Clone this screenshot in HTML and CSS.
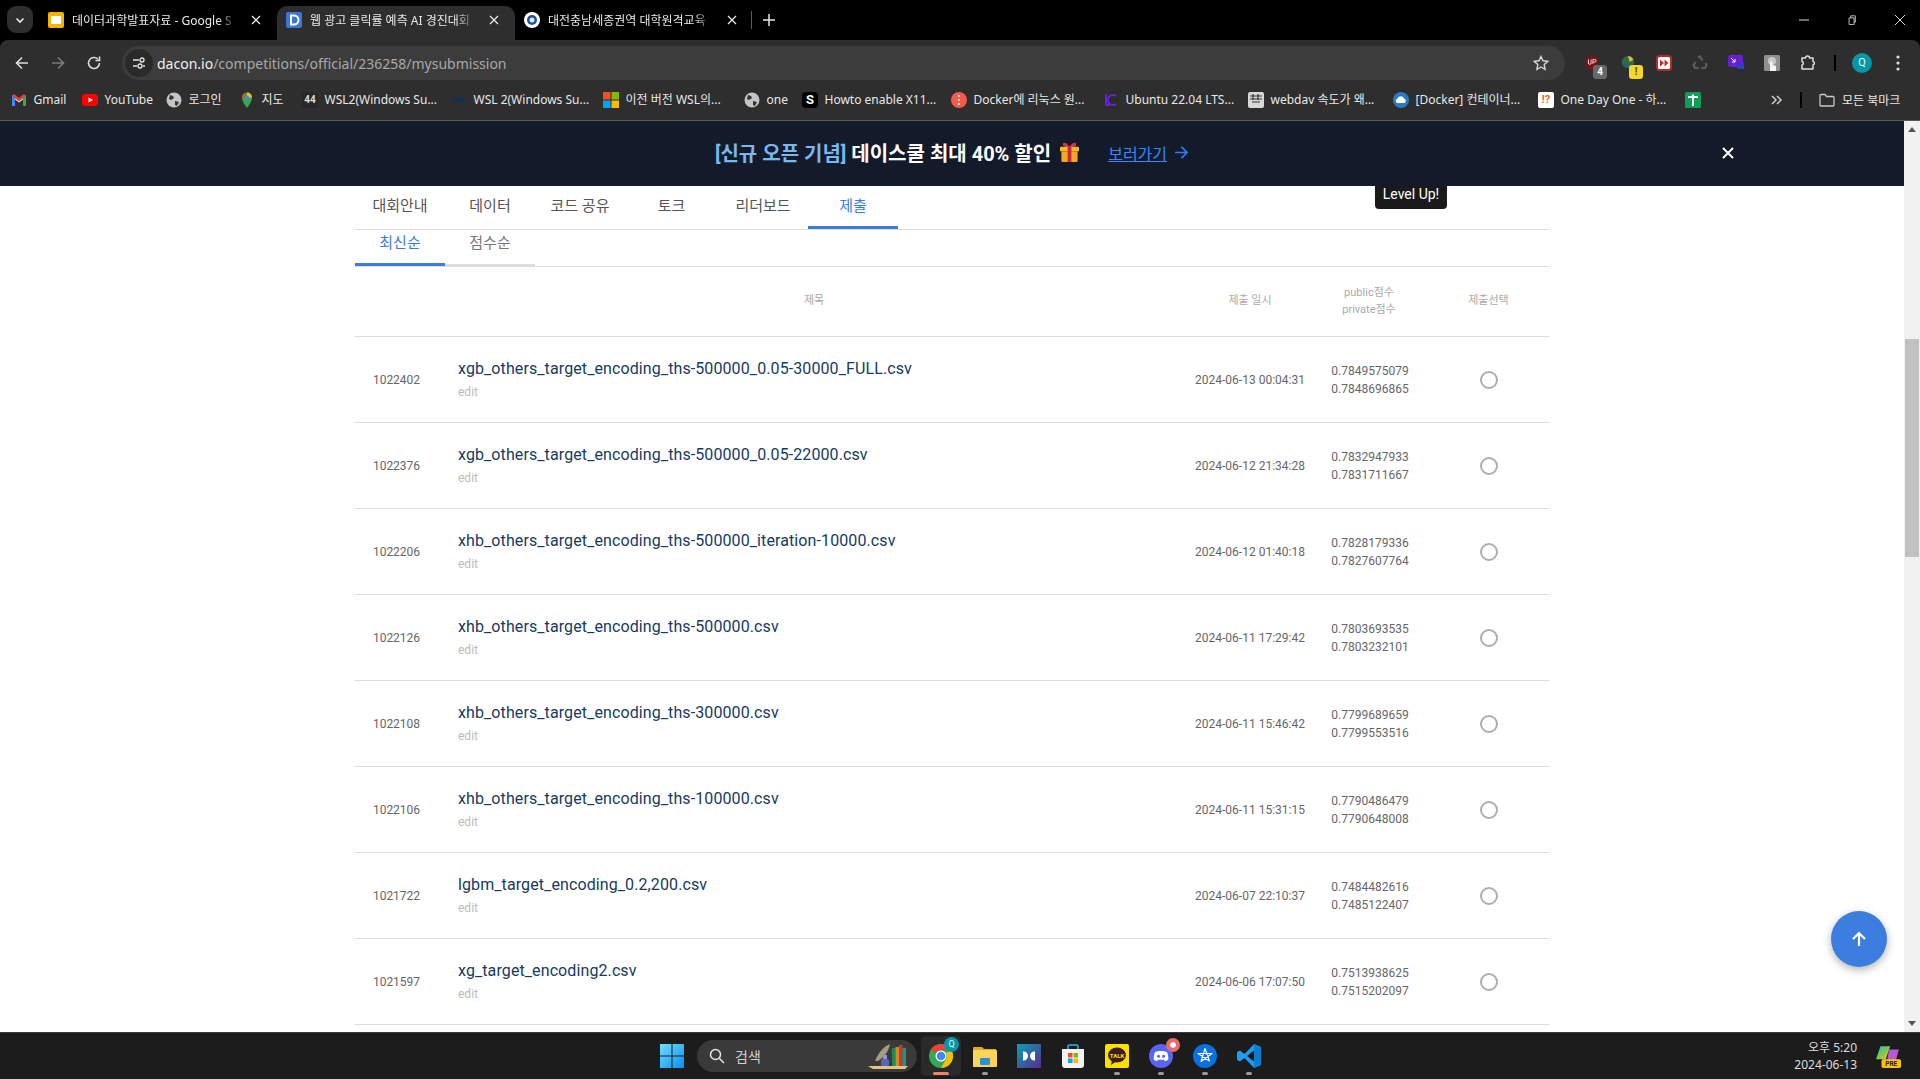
FILE: index.html
```html
<!DOCTYPE html>
<html lang="ko">
<head>
<meta charset="utf-8">
<title>dacon mysubmission</title>
<link rel="stylesheet" href="styles.css">
</head>
<body>
<header class="browser">
  <div class="tabstrip">
    <div class="tabswitch"><svg width="12" height="12" viewBox="0 0 12 12"><path d="M2.5 4.5 6 8l3.5-3.5" fill="none" stroke="#e8e8e8" stroke-width="1.6"/></svg></div>
    <div class="tab">
      <svg class="fav" viewBox="0 0 16 16"><rect x="0" width="16" height="16" rx="2" fill="#f4b400"/><rect x="3" y="4" width="10" height="8" fill="#fff"/></svg>
      <span class="tabtitle">데이터과학발표자료 - Google S</span>
      <svg class="tabclose" viewBox="0 0 10 10"><path d="M1 1l8 8M9 1 1 9" stroke="#e8e8e8" stroke-width="1.3"/></svg>
    </div>
    <div class="tab tab-active">
      <svg class="fav" viewBox="0 0 16 16"><rect width="16" height="16" rx="2" fill="#3a77d8"/><path d="M5 3.5h3a4.500 4.500 0 0 1 0 9H5z" fill="none" stroke="#fff" stroke-width="2"/></svg>
      <span class="tabtitle">웹 광고 클릭률 예측 AI 경진대회</span>
      <svg class="tabclose" viewBox="0 0 10 10"><path d="M1 1l8 8M9 1 1 9" stroke="#e8e8e8" stroke-width="1.3"/></svg>
    </div>
    <div class="tab">
      <svg class="fav" viewBox="0 0 16 16"><circle cx="8" cy="8" r="8" fill="#fff"/><circle cx="8" cy="8" r="5" fill="#1f4f96"/><circle cx="8" cy="8" r="2.500" fill="#dbe6f5"/></svg>
      <span class="tabtitle">대전충남세종권역 대학원격교육</span>
      <svg class="tabclose" viewBox="0 0 10 10"><path d="M1 1l8 8M9 1 1 9" stroke="#e8e8e8" stroke-width="1.3"/></svg>
    </div>
    <span class="tabsep"></span>
    <svg class="tabplus" viewBox="0 0 12 12"><path d="M6 0v12M0 6h12" stroke="#e8e8e8" stroke-width="1.5"/></svg>
    <div class="winctl">
      <svg viewBox="0 0 10 10"><path d="M0 5h10" stroke="#ddd"/></svg>
      <svg viewBox="0 0 10 12"><path d="M1.500 3.500h6v8h-6zM3.500 3.500v-2.500h5.500v7.500H7.500" fill="none" stroke="#ddd"/></svg>
      <svg viewBox="0 0 10 10"><path d="M0 0l10 10M10 0 0 10" stroke="#ddd"/></svg>
    </div>
  </div>
  <div class="chrome">
    <div class="toolbar">
      <div class="navbtns">
        <svg viewBox="0 0 16 16"><path d="M14 8H2.500M8 2.500 2.500 8 8 13.500" fill="none" stroke="#dedede" stroke-width="1.600"/></svg>
        <svg viewBox="0 0 16 16"><path d="M2 8h11.500M8 2.500 13.500 8 8 13.500" fill="none" stroke="#7b7b7b" stroke-width="1.600"/></svg>
        <svg viewBox="0 0 16 16"><path d="M13.500 8A5.500 5.500 0 1 1 11.800 4M13.500 1.500v4h-4" fill="none" stroke="#dedede" stroke-width="1.600"/></svg>
      </div>
      <div class="omnibox">
        <span class="siteinfo"><svg width="14" height="14" viewBox="0 0 14 14"><path d="M1 4h6M1 10h4M11 10h2" stroke="#e4e4e4" stroke-width="1.300"/><circle cx="10" cy="4" r="2" fill="none" stroke="#e4e4e4" stroke-width="1.300"/><circle cx="8" cy="10" r="2" fill="none" stroke="#e4e4e4" stroke-width="1.300"/></svg></span>
        <span class="url"><b class="host">dacon.io</b>/competitions/official/236258/mysubmission</span>
        <svg class="star" viewBox="0 0 16 16"><path d="m8 1.500 2 4.300 4.700.6-3.500 3.200.9 4.700L8 12l-4.100 2.300.9-4.700L1.300 6.400 6 5.800z" fill="none" stroke="#d8d8d8" stroke-width="1.400"/></svg>
      </div>
      <div class="exts">
        <span class="ext"><svg viewBox="0 0 16 18"><path d="M8 1 15 3.500V9c0 4-3 6.500-7 8-4-1.500-7-4-7-8V3.500z" fill="#7d1414"/><path d="M4 5v4a1.500 1.500 0 0 0 3 0V5M9 10V5h2a1.500 1.500 0 0 1 0 3H9" fill="none" stroke="#eee" stroke-width="1"/></svg><i class="badge badge-gray">4</i></span>
        <span class="ext"><svg viewBox="0 0 16 18"><circle cx="8" cy="8" r="7" fill="#2f6b4a"/><path d="M8 1a7 7 0 0 1 6 4l-4 3z" fill="#e3b92c"/><path d="M2 11l4-2 1 5z" fill="#2a4fa8"/></svg><i class="badge badge-yellow">!</i></span>
        <span class="ext"><svg viewBox="0 0 16 16"><rect x="1" y="1" width="14" height="14" rx="2.500" fill="#fff" stroke="#b52a2a" stroke-width="2"/><path d="M4 4.500 8 8l-4 3.500zM8.500 4.500 12.500 8l-4 3.500z" fill="#c62b2b"/></svg></span>
        <span class="ext"><svg viewBox="0 0 16 16"><path d="m6 2.500 2-1 2.500 4M13.500 8l1 2-1.500 3H9.500M6.500 13H3l-1.500-2.500L3.500 7" fill="none" stroke="#5c5c5c" stroke-width="2.200"/></svg></span>
        <span class="ext"><svg viewBox="0 0 16 16"><rect width="15" height="12" y="0" rx="2.500" fill="#6a1fd6"/><rect x="9" y="8" width="8" height="6" rx="1.500" fill="#2e3fd0"/><path d="M3 3l4 4M7 4v3H4" stroke="#fff" fill="none"/></svg></span>
        <span class="ext"><svg viewBox="0 0 16 16"><rect width="16" height="16" rx="1.500" fill="#8f8f8f"/><circle cx="8" cy="6" r="4" fill="#c9c9c9"/><path d="M6 16V7.500a1.200 1.200 0 0 1 2.400 0V10l3.600.8V16z" fill="#f4f4f4"/></svg></span>
        <span class="ext"><svg viewBox="0 0 16 16"><path d="M2 3h3.500a2 2 0 0 1 4 0H13v3.500a1.800 1.800 0 0 1 0 3.500v4H2v-4a1.800 1.800 0 0 0 0-3.500z" fill="none" stroke="#dedede" stroke-width="1.500" stroke-linejoin="round"/></svg></span>
        <span class="toolsep"></span>
        <span class="avatar">Q</span>
        <svg class="menu" viewBox="0 0 4 16"><circle cx="2" cy="2" r="1.600" fill="#dedede"/><circle cx="2" cy="8" r="1.600" fill="#dedede"/><circle cx="2" cy="14" r="1.600" fill="#dedede"/></svg>
      </div>
    </div>
    <div class="bookmarks">
      <div class="bmgrid">
        <span class="bm"><svg viewBox="0 0 16 16"><path d="M1 14V4l7 5 7-5v10h-3V7.500L8 10.500 4 7.500V14z" fill="#e8e8e8"/><path d="M1 14V3.500l3 2.200V14z" fill="#4285f4"/><path d="M15 14V3.500l-3 2.200V14z" fill="#34a853"/><path d="M1 3.500 3 2l5 4 5-4 2 1.500L8 9z" fill="#ea4335"/></svg>Gmail</span>
        <span class="bm"><svg viewBox="0 0 16 16"><rect y="2" width="16" height="12" rx="3" fill="#f00"/><path d="M6.500 5.500v5L11 8z" fill="#fff"/></svg>YouTube</span>
        <span class="bm"><svg viewBox="0 0 16 16"><circle cx="8" cy="8" r="7.500" fill="#c4c4c4"/><path d="M4 3l3 1 1 2-3 2-2-1zM9 9l4 1-2 4-2-1z" fill="#333"/></svg>로그인</span>
        <span class="bm"><svg viewBox="0 0 16 16"><path d="M8 16C5 11.500 3 9 3 5.500a5 5 0 0 1 10 0C13 9 11 11.500 8 16z" fill="#34a853"/><path d="M3 5.500a5 5 0 0 1 2-4l3 4H3z" fill="#ea4335"/><path d="M8 .5a5 5 0 0 1 5 5H8z" fill="#fbbc04"/><circle cx="8" cy="5.500" r="2" fill="#4285f4"/></svg>지도</span>
        <span class="bm"><span class="txticon txticon-dark">44</span>WSL2(Windows Su...</span>
        <span class="bm"><svg viewBox="0 0 16 16"><circle cx="5" cy="8" r="3" fill="#15304f"/><circle cx="11" cy="8" r="3" fill="#15304f"/></svg>WSL 2(Windows Su...</span>
        <span class="bm"><svg viewBox="0 0 16 16"><rect width="7.500" height="7.500" fill="#f25022"/><rect x="8.500" width="7.500" height="7.500" fill="#7fba00"/><rect y="8.500" width="7.500" height="7.500" fill="#00a4ef"/><rect x="8.500" y="8.500" width="7.500" height="7.500" fill="#ffb900"/></svg>이전 버전 WSL의...</span>
        <span class="bm"><svg viewBox="0 0 16 16"><circle cx="8" cy="8" r="7.500" fill="#c4c4c4"/><path d="M4 3l3 1 1 2-3 2-2-1zM9 9l4 1-2 4-2-1z" fill="#333"/></svg>one</span>
        <span class="bm"><span class="txticon txticon-s">S</span>Howto enable X11...</span>
        <span class="bm"><svg viewBox="0 0 16 16"><circle cx="8" cy="8" r="8" fill="#f25a4e"/><path d="M8 3v2M8 7v2M8 11v2" stroke="#fff" stroke-width="1.500"/></svg>Docker에 리눅스 원...</span>
        <span class="bm"><svg viewBox="0 0 16 16"><rect width="16" height="16" fill="#2c2c2c"/><path d="M3 2v11h4M13 4a5 5 0 1 0 0 8" fill="none" stroke="#6a22d8" stroke-width="2"/></svg>Ubuntu 22.04 LTS...</span>
        <span class="bm"><svg viewBox="0 0 16 16"><rect width="16" height="16" rx="2" fill="#d8d8d8"/><path d="M2 4h12M2 7h12M4 10h8M5 2v6M10 2v6" stroke="#333" stroke-width="1.200"/></svg>webdav 속도가 왜...</span>
        <span class="bm"><svg viewBox="0 0 16 16"><circle cx="8" cy="8" r="8" fill="#2d78c4"/><path d="M4 11a2.500 2.500 0 0 1 .5-4.500 3.500 3.500 0 0 1 6.500 0A2.500 2.500 0 0 1 11.500 11z" fill="#fff"/></svg>[Docker] 컨테이너...</span>
        <span class="bm"><span class="txticon txticon-q">!?</span>One Day One - 하...</span>
        <span class="bm"><svg viewBox="0 0 16 16"><rect width="16" height="16" rx="1.500" fill="#0f9d58"/><path d="M3 5h10M8 2.500V14" stroke="#fff" stroke-width="2"/></svg></span>
      </div>
      <div class="bmright">
        <svg class="chev" viewBox="0 0 12 10"><path d="m1 1 4 4-4 4M6 1l4 4-4 4" fill="none" stroke="#cfcfcf" stroke-width="1.500"/></svg>
        <span class="toolsep"></span>
        <svg class="folder" viewBox="0 0 16 14"><path d="M1 2.500a1 1 0 0 1 1-1h4l1.500 2H14a1 1 0 0 1 1 1V12a1 1 0 0 1-1 1H2a1 1 0 0 1-1-1z" fill="none" stroke="#c8c8c8" stroke-width="1.300"/></svg>
        <span class="bmall">모든 북마크</span>
      </div>
    </div>
  </div>
</header>

<div class="viewport">
  <main class="page">
    <div class="banner">
      <span></span>
      <div class="bannermid">
        <span class="promo"><span class="promo-blue">[신규 오픈 기념]</span> 데이스쿨 최대 40% 할인</span>
        <svg class="gift" viewBox="0 0 20 22"><path d="M10 5C7 0 3 0 3 2.500S6 5 10 5c4 0 7-.0 7-2.500S13 0 10 5z" fill="#d8344a"/><rect x="0" y="5" width="20" height="5" rx="1" fill="#f9b92a"/><rect x="1.500" y="10" width="17" height="11" rx="1" fill="#f5a623"/><rect x="8" y="5" width="4" height="16" fill="#c8283f"/></svg>
        <a class="golink">보러가기</a>
        <svg class="goarrow" viewBox="0 0 16 14"><path d="M1 7h13M8 1l6 6-6 6" fill="none" stroke="#2f7bf0" stroke-width="1.800"/></svg>
      </div>
      <div class="bannerright"><svg class="bannerx" viewBox="0 0 12 12"><path d="m1 1 10 10M11 1 1 11" stroke="#fff" stroke-width="2"/></svg></div>
    </div>
    <div class="content">
      <div class="tooltip">Level Up!</div>
      <div class="wrap">
        <nav class="navtabs">
          <a class="navtab">대회안내</a>
          <a class="navtab">데이터</a>
          <a class="navtab">코드 공유</a>
          <a class="navtab navtab-wide">토크</a>
          <a class="navtab">리더보드</a>
          <a class="navtab navtab-on">제출</a>
        </nav>
        <div class="subtabs">
          <a class="subtab subtab-on">최신순</a>
          <a class="subtab">점수순</a>
        </div>
        <div class="thead">
          <span></span>
          <span>제목</span>
          <span>제출 일시</span>
          <span>public점수<br>private점수</span>
          <span>제출선택</span>
        </div>
        <div class="row">
          <span class="rid">1022402</span>
          <div class="rtitle"><a>xgb_others_target_encoding_ths-500000_0.05-30000_FULL.csv</a><small>edit</small></div>
          <span class="rdate">2024-06-13 00:04:31</span>
          <span class="rscore">0.7849575079<br>0.7848696865</span>
          <span class="rsel"><i class="radio"></i></span>
        </div>
        <div class="row">
          <span class="rid">1022376</span>
          <div class="rtitle"><a>xgb_others_target_encoding_ths-500000_0.05-22000.csv</a><small>edit</small></div>
          <span class="rdate">2024-06-12 21:34:28</span>
          <span class="rscore">0.7832947933<br>0.7831711667</span>
          <span class="rsel"><i class="radio"></i></span>
        </div>
        <div class="row">
          <span class="rid">1022206</span>
          <div class="rtitle"><a>xhb_others_target_encoding_ths-500000_iteration-10000.csv</a><small>edit</small></div>
          <span class="rdate">2024-06-12 01:40:18</span>
          <span class="rscore">0.7828179336<br>0.7827607764</span>
          <span class="rsel"><i class="radio"></i></span>
        </div>
        <div class="row">
          <span class="rid">1022126</span>
          <div class="rtitle"><a>xhb_others_target_encoding_ths-500000.csv</a><small>edit</small></div>
          <span class="rdate">2024-06-11 17:29:42</span>
          <span class="rscore">0.7803693535<br>0.7803232101</span>
          <span class="rsel"><i class="radio"></i></span>
        </div>
        <div class="row">
          <span class="rid">1022108</span>
          <div class="rtitle"><a>xhb_others_target_encoding_ths-300000.csv</a><small>edit</small></div>
          <span class="rdate">2024-06-11 15:46:42</span>
          <span class="rscore">0.7799689659<br>0.7799553516</span>
          <span class="rsel"><i class="radio"></i></span>
        </div>
        <div class="row">
          <span class="rid">1022106</span>
          <div class="rtitle"><a>xhb_others_target_encoding_ths-100000.csv</a><small>edit</small></div>
          <span class="rdate">2024-06-11 15:31:15</span>
          <span class="rscore">0.7790486479<br>0.7790648008</span>
          <span class="rsel"><i class="radio"></i></span>
        </div>
        <div class="row">
          <span class="rid">1021722</span>
          <div class="rtitle"><a>lgbm_target_encoding_0.2,200.csv</a><small>edit</small></div>
          <span class="rdate">2024-06-07 22:10:37</span>
          <span class="rscore">0.7484482616<br>0.7485122407</span>
          <span class="rsel"><i class="radio"></i></span>
        </div>
        <div class="row">
          <span class="rid">1021597</span>
          <div class="rtitle"><a>xg_target_encoding2.csv</a><small>edit</small></div>
          <span class="rdate">2024-06-06 17:07:50</span>
          <span class="rscore">0.7513938625<br>0.7515202097</span>
          <span class="rsel"><i class="radio"></i></span>
        </div>
      </div>
      <button class="fab"><svg viewBox="0 0 18 18"><path d="M9 16V3M3 9l6-6 6 6" fill="none" stroke="#fff" stroke-width="2.200"/></svg></button>
    </div>
  </main>
  <aside class="scrollbar">
    <span class="sbarrow sbarrow-up"></span>
    <span class="sbthumb"></span>
    <span class="sbarrow sbarrow-down"></span>
  </aside>
</div>

<footer class="taskbar">
  <div class="tbcell"><svg class="winlogo" viewBox="0 0 24 24"><defs><linearGradient id="w" x1="0" y1="0" x2="1" y2="1"><stop offset="0" stop-color="#6fe0ff"/><stop offset="1" stop-color="#0a8cf0"/></linearGradient></defs><path d="M0 0h11.500v11.500H0zM12.500 0H24v11.500H12.500zM0 12.500h11.500V24H0zM12.500 12.500H24V24H12.500z" fill="url(#w)"/></svg></div>
  <div class="search">
    <svg class="searchicon" viewBox="0 0 16 16"><circle cx="6.500" cy="6.500" r="5" fill="none" stroke="#e6e6e6" stroke-width="1.500"/><path d="m10.500 10.500 4.500 4.500" stroke="#e6e6e6" stroke-width="1.500"/></svg>
    <span class="searchtext">검색</span>
    <svg class="searchart" viewBox="0 0 44 26"><path d="M1 23h40l-3 3H6z" fill="#e3c57f"/><path d="M8 18C12 8 18 3 23 1c-1 7-6 13-12 17z" fill="#a69a84"/><rect x="14" y="16" width="8" height="7" rx="1.500" fill="#5866b8"/><rect x="16" y="12" width="4" height="4" fill="#8d97d8"/><rect x="25" y="5" width="3.500" height="18" fill="#1d8a54"/><rect x="28.500" y="4" width="3.500" height="19" fill="#d08b2a"/><rect x="32" y="2" width="3.500" height="21" fill="#c83a2c"/><rect x="35.500" y="5" width="3.500" height="18" fill="#2b8f86"/></svg>
  </div>
  <div class="tbcell tbcell-on">
    <svg class="tbicon" viewBox="0 0 24 24"><circle cx="12" cy="12" r="12" fill="#34a853"/><path d="M12 0a12 12 0 0 1 10.400 6H12a6 6 0 0 0-5.200 3L1.600 6A12 12 0 0 1 12 0z" fill="#ea4335"/><path d="M22.400 6A12 12 0 0 1 12 24l5.200-9A6 6 0 0 0 17 9z" fill="#fbbc04"/><circle cx="12" cy="12" r="5.500" fill="#fff"/><circle cx="12" cy="12" r="4.300" fill="#4285f4"/></svg>
    <i class="tbprofile">Q</i>
    <i class="tbdot tbdot-on"></i>
  </div>
  <div class="tbcell">
    <svg class="tbicon" viewBox="0 0 24 22"><path d="M0 3a1 1 0 0 1 1-1h8l2 2h12v16a1 1 0 0 1-1 1H1z" fill="#e9a820"/><rect x="0" y="5" width="24" height="17" rx="1" fill="#fcd459"/><rect x="7" y="13" width="10" height="7" rx="1" fill="#2c8fd8"/></svg>
    <i class="tbdot"></i>
  </div>
  <div class="tbcell">
    <svg class="tbicon" viewBox="0 0 24 24"><defs><linearGradient id="d" x1="0" y1="0" x2="1" y2="1"><stop offset="0" stop-color="#0aa0b4"/><stop offset="1" stop-color="#5b2a8c"/></linearGradient></defs><rect width="24" height="24" fill="url(#d)"/><path d="M6 7.500h.5a4.500 4.500 0 0 1 4.500 4.500 4.500 4.500 0 0 1-4.500 4.500H6zM18 7.500h-.5A4.500 4.500 0 0 0 13 12a4.500 4.500 0 0 0 4.500 4.500h.5z" fill="#fff"/></svg>
  </div>
  <div class="tbcell">
    <svg class="tbicon" viewBox="0 0 24 24"><path d="M7 5V2.500A1.500 1.500 0 0 1 8.500 1h7A1.500 1.500 0 0 1 17 2.500V5" fill="none" stroke="#35b5e8" stroke-width="1.500"/><path d="M1 5h22v16a3 3 0 0 1-3 3H4a3 3 0 0 1-3-3z" fill="#f2f2f2"/><rect x="7" y="9" width="4.500" height="4.500" fill="#f25022"/><rect x="12.500" y="9" width="4.500" height="4.500" fill="#7fba00"/><rect x="7" y="14.500" width="4.500" height="4.500" fill="#00a4ef"/><rect x="12.500" y="14.500" width="4.500" height="4.500" fill="#ffb900"/></svg>
  </div>
  <div class="tbcell">
    <svg class="tbicon" viewBox="0 0 24 24"><rect width="24" height="24" rx="2" fill="#fae100"/><ellipse cx="12" cy="11" rx="9" ry="7.500" fill="#3c1e1e"/><path d="M7 16l-1 5 5-3.500z" fill="#3c1e1e"/><text class="talk" x="12" y="13.500">TALK</text></svg>
    <i class="tbdot"></i>
  </div>
  <div class="tbcell">
    <svg class="tbicon" viewBox="0 0 24 24"><circle cx="12" cy="12" r="12" fill="#5865f2"/><path d="M6 8c3-1.500 9-1.500 12 0 1 2.500 1.500 5 1.300 7.500-1.500 1-2.500 1.500-3.300 1.700l-1-1.500h-6l-1 1.500c-.8-.2-1.800-.7-3.300-1.700C4.500 13 5 10.500 6 8z" fill="#fff"/><circle cx="9.500" cy="12.300" r="1.500" fill="#5865f2"/><circle cx="14.500" cy="12.300" r="1.500" fill="#5865f2"/></svg>
    <i class="tbnotif"></i>
    <i class="tbdot"></i>
  </div>
  <div class="tbcell">
    <svg class="tbicon" viewBox="0 0 24 24"><circle cx="12" cy="12" r="12" fill="#0a6fe0"/><path d="M12 4.500 16.500 17 5 9.500h14L8 17.500z" fill="none" stroke="#fff" stroke-width="1.100" stroke-linejoin="round"/></svg>
    <i class="tbdot"></i>
  </div>
  <div class="tbcell">
    <svg class="tbicon" viewBox="0 0 24 24"><path d="M17 0 7.500 10 3 6.500 0 8v8l3 1.500 4.500-3.500L17 24l7-3V3z" fill="#1f9cf0"/><path d="M17 6.500 10 12l7 5.500z" fill="#1a1a1a"/><path d="M17 0l7 3v18l-7 3z" fill="#0a7fd0"/></svg>
    <i class="tbdot"></i>
  </div>
  <div class="clock">
    <span>오후 5:20</span>
    <span>2024-06-13</span>
  </div>
  <svg class="copilot" viewBox="0 0 24 24"><defs><linearGradient id="c" x1="0" y1="0" x2="1" y2="1"><stop offset="0" stop-color="#2cb6e8"/><stop offset=".5" stop-color="#7bc94a"/><stop offset="1" stop-color="#f2c230"/></linearGradient></defs><path d="M5 3h9l-4 12H1z" fill="url(#c)"/><path d="M13 6h9l-3 11h-8z" fill="#b45ad8"/><rect x="6" y="15" width="18" height="8" rx="1.500" fill="#ffc107"/><text class="pre" x="15" y="21.500">PRE</text></svg>
</footer>
</body>
</html>
```

FILE: styles.css
```css
* { box-sizing: border-box; }
html, body { margin: 0; height: 100%; }
body {
  width: 1920px;
  height: 1079px;
  overflow: hidden;
  display: flex;
  flex-direction: column;
  font-family: Roboto, "Noto Sans CJK KR", sans-serif;
  background: #fff;
}

/* browser frame */
.browser { flex: none; background: #000; font-family: "Noto Sans", "Noto Sans CJK KR", sans-serif; color: #e8e8e8; font-size: 12px; }
.tabstrip { height: 40px; display: flex; align-items: center; padding-left: 7px; }
.tabswitch { width: 26px; height: 27px; margin: -1px 6px 0 0; background: #2e2e2e; border-radius: 9px; display: flex; align-items: center; justify-content: center; }
.tab { width: 238px; height: 34px; margin-top: 6px; padding: 0 13px 6px 9px; display: flex; align-items: center; gap: 8px; position: relative; }
.tab-active { background: #2e2e2e; border-radius: 10px 10px 0 0; }
.fav { width: 16px; height: 16px; flex: none; }
.tabtitle { flex: 1; min-width: 0; white-space: nowrap; -webkit-mask-image: linear-gradient(90deg, #000 88%, transparent); mask-image: linear-gradient(90deg, #000 88%, transparent); }
.tabclose { width: 10px; height: 10px; flex: none; margin: 0 3px 0 5px; }
.tabsep { width: 1px; height: 18px; background: #5a5a5a; margin-left: -2px; }
.tabplus { width: 12px; height: 12px; margin-left: 11px; }
.winctl { margin-left: auto; display: flex; align-items: center; gap: 38px; padding-right: 15px; }
.winctl svg { width: 10px; height: 10px; }

.chrome { background: #2e2e2e; border-radius: 8px 8px 0 0; height: 81px; border-bottom: 1px solid #5a5a5a; }
.toolbar { height: 42px; display: flex; align-items: flex-start; padding-top: 6px; }
.navbtns { width: 122px; height: 34px; display: flex; align-items: center; gap: 20px; padding-left: 14px; }
.navbtns svg { width: 16px; height: 16px; }
.omnibox { width: 1443px; height: 34px; background: #3c3c3c; border-radius: 17px; display: flex; align-items: center; padding: 0 16px 0 3px; }
.siteinfo { width: 28px; height: 28px; border-radius: 50%; background: #2a2a2a; display: flex; align-items: center; justify-content: center; }
.url { margin-left: 4px; font-size: 14px; color: #a8a8a8; flex: 1; }
.host { font-weight: 400; color: #f0f0f0; }
.star { width: 16px; height: 16px; margin-right: 0; }
.exts { flex: 1; height: 34px; display: flex; align-items: center; padding-left: 9px; }
.ext { width: 36px; height: 34px; display: flex; align-items: center; justify-content: center; position: relative; }
.ext > svg { width: 16px; height: 16px; }
.badge { position: absolute; right: 3px; bottom: 1px; min-width: 14px; height: 14px; border-radius: 3px; font: 700 10px/14px Roboto, sans-serif; text-align: center; }
.badge-gray { background: #686868; color: #fff; }
.badge-yellow { background: #f6d32d; color: #5a4a00; }
.toolsep { width: 2px; height: 16px; background: #000; flex: none; }
.exts .toolsep { margin-left: 8px; }
.avatar { width: 20px; height: 20px; border-radius: 50%; background: #0795a8; color: #dff; font: 400 11px/20px Roboto, sans-serif; text-align: center; margin-left: 16px; }
.menu { width: 4px; height: 16px; margin-left: 24px; }

.bookmarks { height: 35px; display: flex; align-items: center; padding-left: 11px; }
.bmgrid { width: 1749px; display: grid; grid-template-columns: 71px 84px 73px 63px 149px 152px 141px 58px 149px 152px 145px 145px 145px 147px 16px; align-items: center; }
.bm { display: flex; align-items: center; gap: 6.5px; white-space: nowrap; color: #e8e8e8; font-size: 12px; line-height: 16px; }
.bm svg { width: 16px; height: 16px; flex: none; }
.txticon { width: 16px; height: 16px; flex: none; font: 700 10px/16px Roboto, sans-serif; text-align: center; border-radius: 2px; }
.txticon-dark { background: #26282b; color: #ddd; }
.txticon-s { background: #000; color: #fff; font-size: 13px; border-radius: 4px; }
.txticon-q { background: #fff; color: #e8641b; font-size: 11px; }
.bmright { display: flex; align-items: center; margin-left: 11px; }
.chev { width: 12px; height: 10px; margin-right: 17px; }
.folder { width: 16px; height: 14px; margin-left: 17px; }
.bmall { margin-left: 7px; color: #e8e8e8; }

/* page */
.viewport { flex: none; height: 911px; display: flex; }
.page { width: 1904px; display: flex; flex-direction: column; position: relative; }
.banner { flex: none; height: 65px; padding-bottom: 2px; background: #131b2b; display: grid; grid-template-columns: 1fr auto 1fr; align-items: center; position: relative; z-index: 2; }
.bannermid { display: flex; align-items: center; }
.promo { color: #fff; font-size: 20px; font-weight: 700; white-space: nowrap; }
.promo-blue { color: #7ab6f2; }
.gift { width: 19px; height: 21px; margin-left: 9px; }
.golink { margin-left: 29px; color: #3a86ff; font-size: 16px; text-decoration: underline; }
.goarrow { width: 15px; height: 13px; margin-left: 7px; }
.bannerright { display: flex; justify-content: flex-end; padding-right: 170px; }
.bannerx { width: 12px; height: 12px; }

.content { flex: 1; position: relative; overflow: hidden; }
.tooltip { position: absolute; left: 1375px; top: -10px; width: 72px; height: 33px; padding-top: 8px; background: #1a1a1a; color: #fff; font-size: 14px; line-height: 20px; text-align: center; border-radius: 0 0 4px 4px; z-index: 1; }
.wrap { width: 1194px; margin-left: 355px; }

.navtabs { height: 44px; display: flex; border-bottom: 1px solid #ddd; }
.navtab { width: 90px; height: 43px; display: flex; align-items: center; justify-content: center; padding-bottom: 7px; font-size: 15px; color: #555; }
.navtab-wide { width: 93px; }
.navtab-on { color: #3b7ddd; border-bottom: 3px solid #3b7ddd; padding-bottom: 4px; }
.subtabs { height: 37px; display: flex; border-bottom: 1px solid #ddd; }
.subtab { width: 90px; height: 36px; display: flex; align-items: center; justify-content: center; padding-bottom: 11px; font-size: 15px; color: #777; border-bottom: 2px solid #ddd; }
.subtab-on { color: #3b7ddd; border-bottom: 3px solid #3b7ddd; padding-bottom: 10px; }

.thead, .row { display: grid; grid-template-columns: 83px 752px 120px 118px 121px; align-items: center; border-bottom: 1px solid #ddd; text-align: center; }
.thead { height: 70px; padding-bottom: 2px; font-size: 11px; line-height: 17px; color: #aaa; }
.row { height: 86px; font-size: 12px; color: #666; }
.rtitle { text-align: left; padding: 0 0 3px 20px; display: flex; flex-direction: column; }
.rtitle a { font-size: 16px; line-height: 24px; letter-spacing: .1px; color: #173a5e; }
.rtitle small { font-size: 12px; line-height: 16px; margin-top: 3px; color: #bbb; }
.rscore { line-height: 18px; padding-left: 2px; }
.rsel { display: flex; justify-content: center; }
.radio { width: 18px; height: 18px; border-radius: 50%; border: 2px solid #aeaeae; }

.fab { position: absolute; left: 1831px; top: 725px; width: 56px; height: 56px; border: 0; border-radius: 50%; background: #3c7de0; box-shadow: 0 3px 8px rgba(0,0,0,.3); display: flex; align-items: center; justify-content: center; padding: 0; }
.fab svg { width: 18px; height: 18px; }

.scrollbar { width: 16px; background: #f1f1f1; display: flex; flex-direction: column; align-items: center; }
.sbarrow { width: 0; height: 0; flex: none; border-left: 4px solid transparent; border-right: 4px solid transparent; }
.sbarrow-up { border-bottom: 5px solid #555; margin-top: 6px; }
.sbarrow-down { border-top: 5px solid #555; margin-top: auto; margin-bottom: 6px; }
.sbthumb { width: 14px; height: 218px; background: #c1c1c1; margin-top: 207px; }

/* taskbar */
.taskbar { flex: none; height: 47px; background: #1c1c1c; border-top: 1px solid #3a3a3a; display: flex; align-items: center; padding-left: 650px; font-family: "Noto Sans", "Noto Sans CJK KR", sans-serif; }
.tbcell { width: 44px; height: 40px; display: flex; align-items: center; justify-content: center; position: relative; flex: none; }
.tbcell-on { background: #2a2a2a; border-radius: 5px; width: 40px; margin: 0 2px; }
.winlogo { width: 24px; height: 24px; }
.tbicon { width: 24px; height: 24px; }
.search { width: 220px; height: 32px; margin: 0 2px 0 3px; background: #3a3a3a; border-radius: 16px; display: flex; align-items: center; padding: 0 6px 0 12px; color: #d0d0d0; font-size: 14px; }
.searchicon { width: 16px; height: 16px; }
.searchtext { margin-left: 10px; flex: 1; }
.searchart { width: 44px; height: 26px; }
.tbdot { position: absolute; left: 19px; bottom: 1px; width: 6px; height: 3px; border-radius: 2px; background: #9b9b9b; }
.tbdot-on { left: 12px; width: 16px; background: #f0826e; }
.tbprofile { position: absolute; right: 2px; top: 1px; width: 15px; height: 15px; border-radius: 50%; background: #0795a8; color: #dff; font: 400 9px/15px Roboto, sans-serif; text-align: center; }
.tbnotif { position: absolute; right: 3px; top: 2px; width: 14px; height: 14px; border-radius: 50%; background: #ea6a6a; border: 4px solid #ea6a6a; background-clip: border-box; box-shadow: inset 0 0 0 3px #fff; }
.talk { font: 700 6px Roboto, sans-serif; fill: #fae100; text-anchor: middle; }
.pre { font: 700 6px Roboto, sans-serif; fill: #222; text-anchor: middle; }
.clock { margin-left: auto; margin-right: 18px; display: flex; flex-direction: column; align-items: flex-end; font-size: 12px; line-height: 17px; color: #dcdcdc; }
.copilot { width: 26px; height: 26px; margin-right: 19px; }
```
